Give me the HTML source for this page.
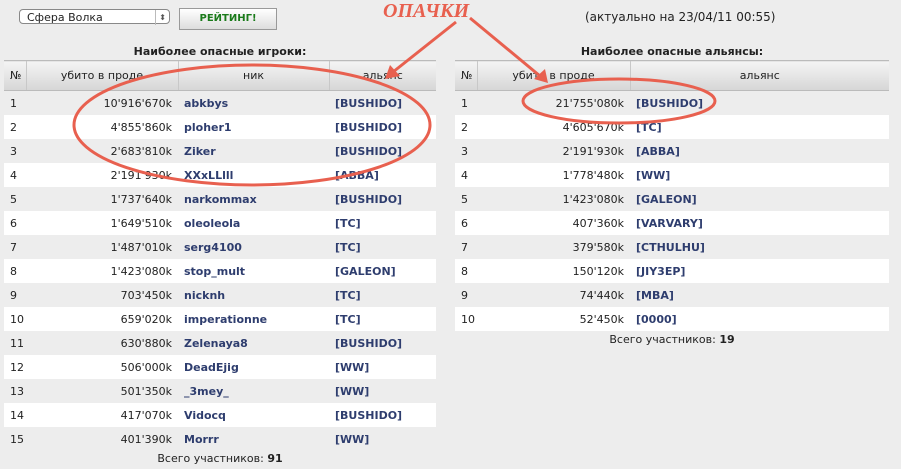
<!DOCTYPE html>
<html><head><meta charset="utf-8"><style>
body{margin:0;width:901px;height:469px;background:#ededed;font-family:"DejaVu Sans","Liberation Sans",sans-serif;font-size:11px;color:#222;position:relative;overflow:hidden}
.a{position:absolute}
table{position:absolute;border-collapse:collapse;font-size:11px;table-layout:fixed}
td,th{height:24px;padding:0 6px;white-space:nowrap;overflow:hidden}
th{height:29px;font-weight:normal;background:linear-gradient(#f4f4f4,#d6d6d6);border-left:1px solid #c8c8c8;border-top:1px solid #bbb;border-bottom:1px solid #bbb}
th:first-child{border-left:none;text-align:left}
tr.w td{background:#fff}
td.n{text-align:right}
b.l{color:#2e3d6e}
.cap{position:absolute;font-weight:bold;text-align:center}
.foot{position:absolute;text-align:center}
</style></head><body>
<div class="a" style="left:19px;top:9px;height:15px;border:1px solid #888;border-radius:4px;background:#fff;font-size:11px;line-height:15px;padding-left:7px;box-sizing:border-box;width:151px">Сфера Волка<span style="position:absolute;right:3px;top:0;border-left:1px solid #bbb;padding-left:3px;font-size:8px;color:#555">⬍</span></div>
<div class="a" style="left:179px;top:8px;width:96px;height:20px;border:1px solid #999;background:linear-gradient(#fff,#ddd);color:#1a7a1a;font-weight:bold;font-size:10px;text-align:center;line-height:20px">РЕЙТИНГ!</div>
<div class="a" style="left:585px;top:10px;font-size:12px">(актуально на 23/04/11 00:55)</div>

<div class="cap" style="left:4px;width:432px;top:45px">Наиболее опасные игроки:</div>
<table style="left:4px;top:60px;width:432px">
<colgroup><col style="width:22px"><col style="width:152px"><col style="width:151px"><col style="width:107px"></colgroup>
<tr><th>№</th><th>убито в проде</th><th>ник</th><th>альянс</th></tr>
<tr><td>1</td><td class="n">10'916'670k</td><td><b class="l">abkbys</b></td><td><b class="l">[BUSHIDO]</b></td></tr>
<tr class="w"><td>2</td><td class="n">4'855'860k</td><td><b class="l">ploher1</b></td><td><b class="l">[BUSHIDO]</b></td></tr>
<tr><td>3</td><td class="n">2'683'810k</td><td><b class="l">Ziker</b></td><td><b class="l">[BUSHIDO]</b></td></tr>
<tr class="w"><td>4</td><td class="n">2'191'930k</td><td><b class="l">XXxLLlll</b></td><td><b class="l">[ABBA]</b></td></tr>
<tr><td>5</td><td class="n">1'737'640k</td><td><b class="l">narkommax</b></td><td><b class="l">[BUSHIDO]</b></td></tr>
<tr class="w"><td>6</td><td class="n">1'649'510k</td><td><b class="l">oleoleola</b></td><td><b class="l">[TC]</b></td></tr>
<tr><td>7</td><td class="n">1'487'010k</td><td><b class="l">serg4100</b></td><td><b class="l">[TC]</b></td></tr>
<tr class="w"><td>8</td><td class="n">1'423'080k</td><td><b class="l">stop_mult</b></td><td><b class="l">[GALEON]</b></td></tr>
<tr><td>9</td><td class="n">703'450k</td><td><b class="l">nicknh</b></td><td><b class="l">[TC]</b></td></tr>
<tr class="w"><td>10</td><td class="n">659'020k</td><td><b class="l">imperationne</b></td><td><b class="l">[TC]</b></td></tr>
<tr><td>11</td><td class="n">630'880k</td><td><b class="l">Zelenaya8</b></td><td><b class="l">[BUSHIDO]</b></td></tr>
<tr class="w"><td>12</td><td class="n">506'000k</td><td><b class="l">DeadEjig</b></td><td><b class="l">[WW]</b></td></tr>
<tr><td>13</td><td class="n">501'350k</td><td><b class="l">_3mey_</b></td><td><b class="l">[WW]</b></td></tr>
<tr class="w"><td>14</td><td class="n">417'070k</td><td><b class="l">Vidocq</b></td><td><b class="l">[BUSHIDO]</b></td></tr>
<tr><td>15</td><td class="n">401'390k</td><td><b class="l">Morrr</b></td><td><b class="l">[WW]</b></td></tr>
</table>
<div class="foot" style="left:4px;width:432px;top:452px">Всего участников: <b>91</b></div>

<div class="cap" style="left:455px;width:434px;top:45px">Наиболее опасные альянсы:</div>
<table style="left:455px;top:60px;width:434px">
<colgroup><col style="width:22px"><col style="width:153px"><col style="width:259px"></colgroup>
<tr><th>№</th><th>убито в проде</th><th>альянс</th></tr>
<tr><td>1</td><td class="n">21'755'080k</td><td><b class="l">[BUSHIDO]</b></td></tr>
<tr class="w"><td>2</td><td class="n">4'605'670k</td><td><b class="l">[TC]</b></td></tr>
<tr><td>3</td><td class="n">2'191'930k</td><td><b class="l">[ABBA]</b></td></tr>
<tr class="w"><td>4</td><td class="n">1'778'480k</td><td><b class="l">[WW]</b></td></tr>
<tr><td>5</td><td class="n">1'423'080k</td><td><b class="l">[GALEON]</b></td></tr>
<tr class="w"><td>6</td><td class="n">407'360k</td><td><b class="l">[VARVARY]</b></td></tr>
<tr><td>7</td><td class="n">379'580k</td><td><b class="l">[CTHULHU]</b></td></tr>
<tr class="w"><td>8</td><td class="n">150'120k</td><td><b class="l">[JIY3EP]</b></td></tr>
<tr><td>9</td><td class="n">74'440k</td><td><b class="l">[MBA]</b></td></tr>
<tr class="w"><td>10</td><td class="n">52'450k</td><td><b class="l">[0000]</b></td></tr>
</table>
<div class="foot" style="left:455px;width:434px;top:333px">Всего участников: <b>19</b></div>

<div class="a" style="left:383px;top:0px;font-family:'Liberation Serif',serif;font-style:italic;font-weight:bold;font-size:20px;color:#e8604f">ОПАЧКИ</div>
<svg class="a" style="left:0;top:0" width="901" height="469">
<g fill="none" stroke="#e8604f" stroke-width="3">
<ellipse cx="252" cy="125" rx="178" ry="60"/>
<ellipse cx="619" cy="101" rx="96" ry="22"/>
<line x1="456" y1="22" x2="393" y2="72"/>
<line x1="470" y1="18" x2="540" y2="76"/>
</g>
<g fill="#e8604f">
<polygon points="385,79 390,65 400,76"/>
<polygon points="548,83 534,79 545,69"/>
</g>
</svg>
</body></html>
